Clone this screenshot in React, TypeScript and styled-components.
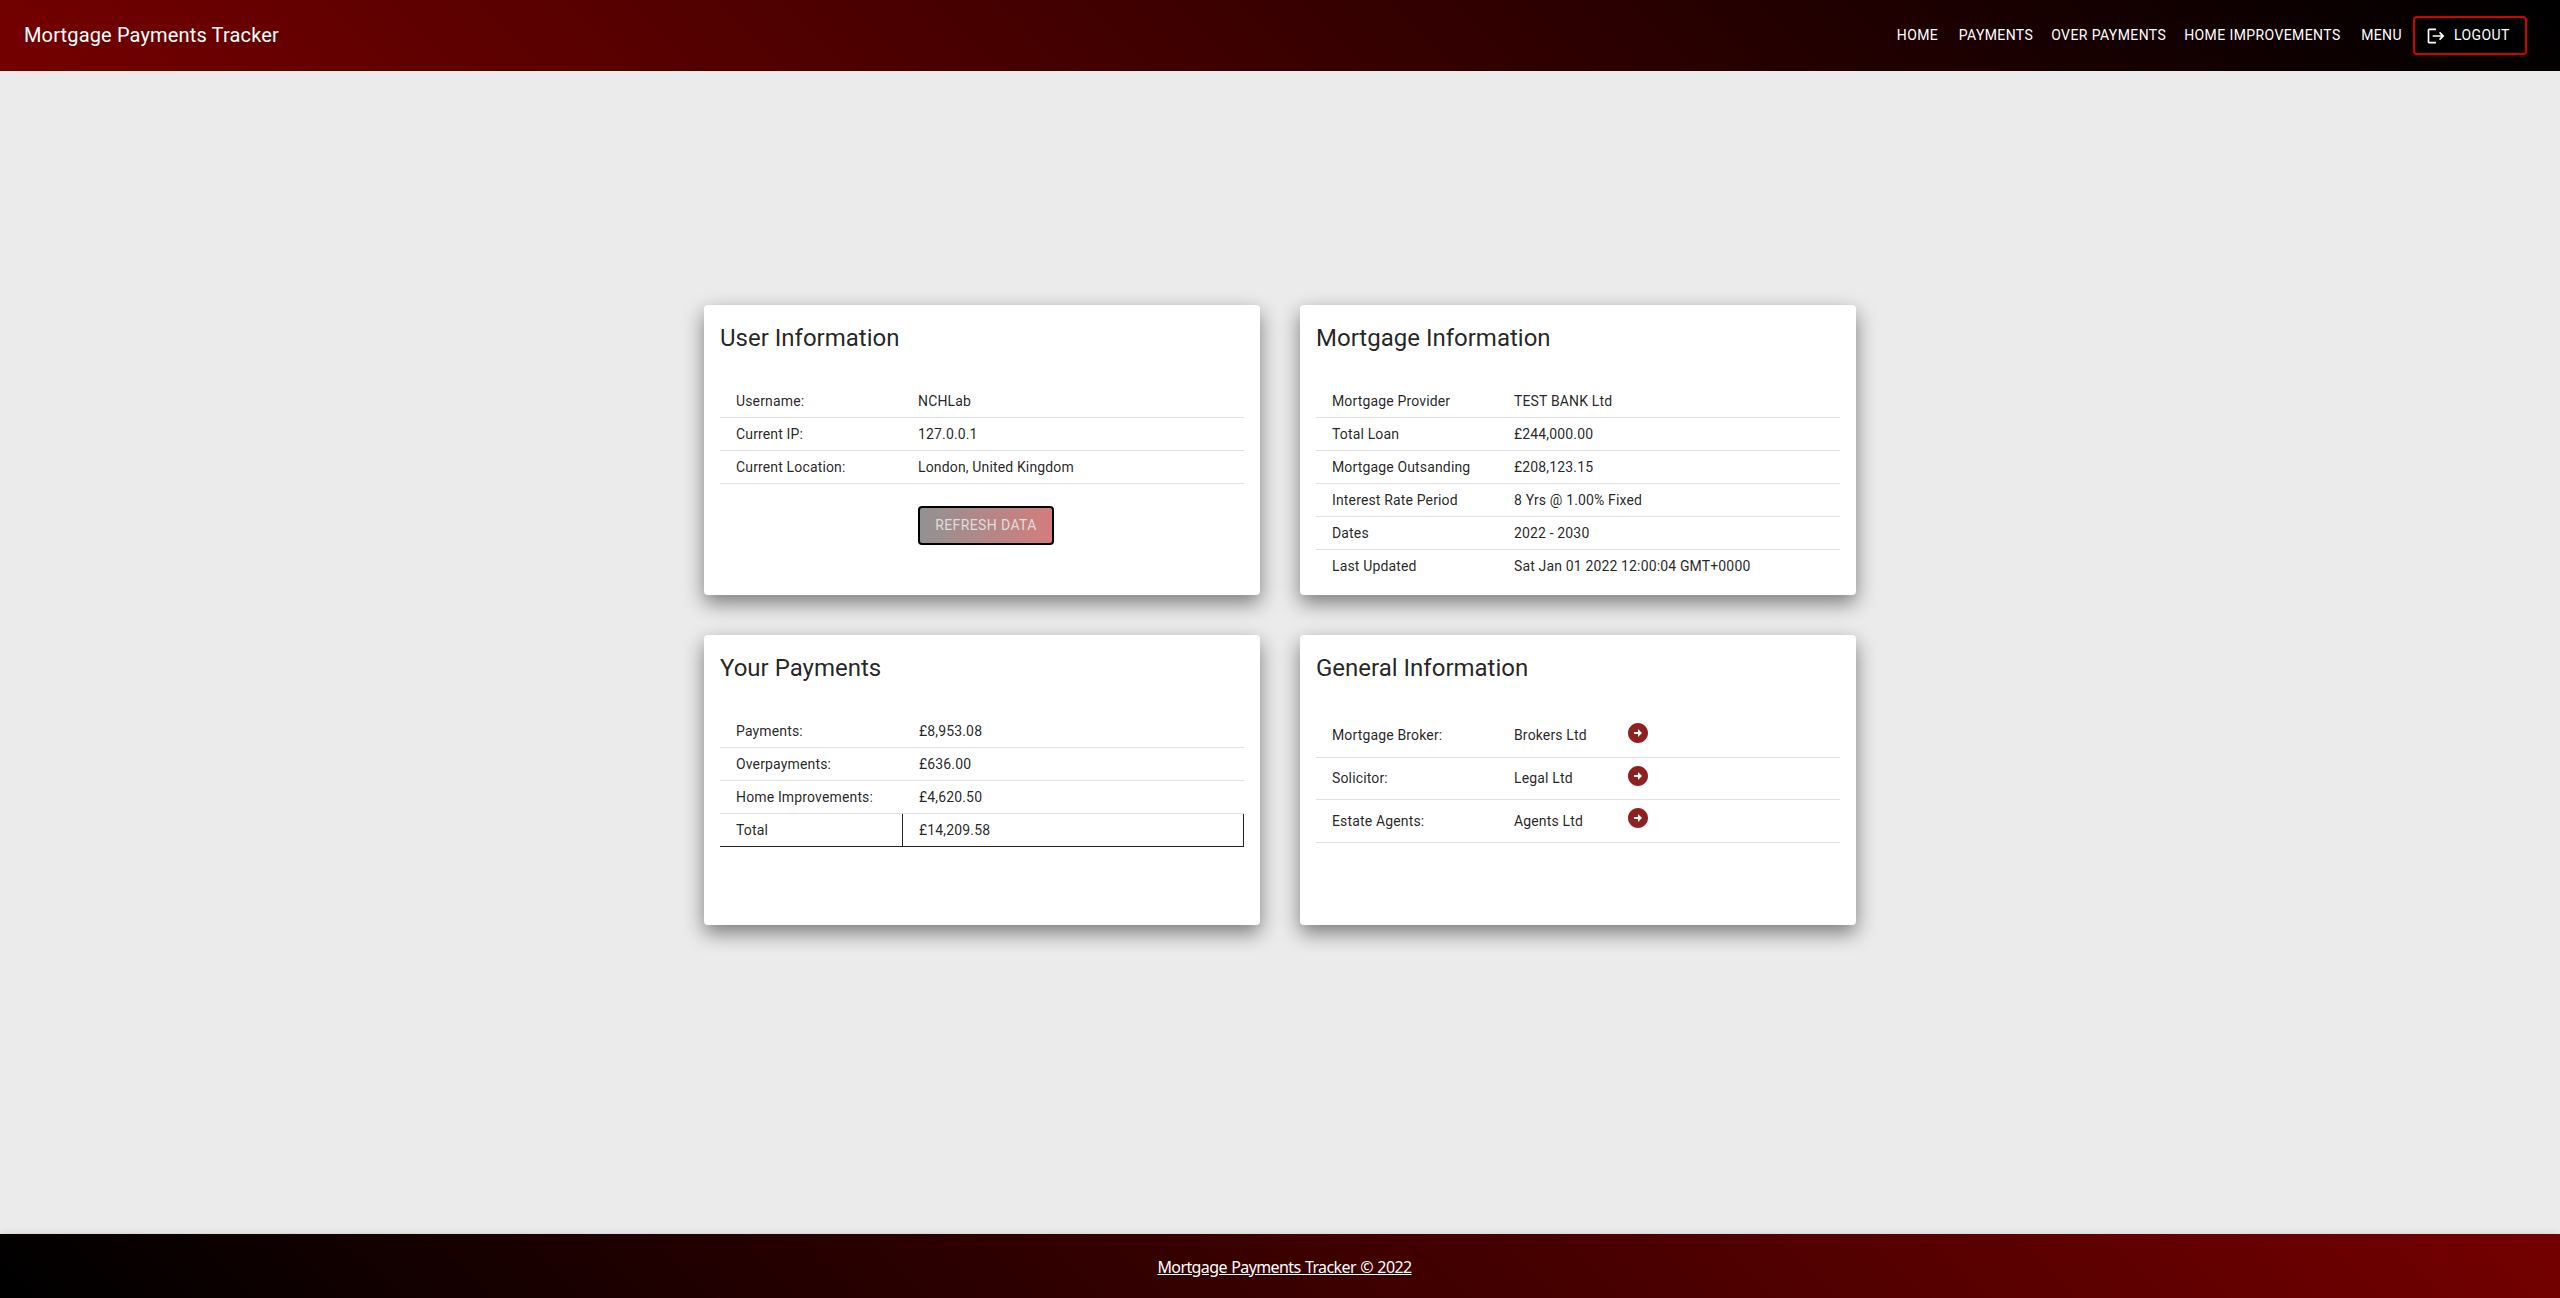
import React from "react";
import styled, { createGlobalStyle } from "styled-components";
import { MdLogout } from "react-icons/md";

const GlobalStyle = createGlobalStyle`
  *, *::before, *::after { box-sizing: border-box; }
  body {
    margin: 0;
    background: #ebebeb;
    color: rgba(0, 0, 0, 0.87);
    font-family: Roboto, "Liberation Sans", sans-serif;
  }
`;

const Page = styled.div`
  display: flex;
  flex-direction: column;
  height: 100vh;
  min-height: 1000px;
`;

const Header = styled.header`
  display: flex;
  align-items: center;
  justify-content: space-between;
  flex: none;
  height: 71px;
  padding: 0 33px 0 24px;
  color: #fff;
  background: linear-gradient(45deg, #740000 0%, #000 100%);
`;

const Brand = styled.div`
  margin-bottom: 1px;
  font-size: 20px;
  line-height: 32px;
  letter-spacing: 0.15px;
`;

const Nav = styled.nav`
  display: flex;
  align-items: center;
`;

const NavLink = styled.a<{ $gap: number }>`
  margin-right: ${(p) => p.$gap}px;
  font-size: 14px;
  line-height: 24.5px;
  letter-spacing: 0.4px;
  font-weight: 400;
  color: #fff;
  text-transform: uppercase;
`;

const LogoutButton = styled.button`
  display: flex;
  align-items: center;
  width: 114px;
  height: 39px;
  padding: 0 0 0 11px;
  gap: 8px;
  border: 2px solid #d60000;
  border-radius: 4px;
  background: #000;
  color: #fff;
  font: 400 14px/24.5px Roboto, sans-serif;
  letter-spacing: 0.4px;
  text-transform: uppercase;
`;

const Main = styled.main`
  display: grid;
  grid-template-columns: 556px 556px;
  grid-auto-rows: 290px;
  gap: 40px;
  justify-content: center;
  flex: 1;
  padding-top: 234px;
`;

const Card = styled.section`
  padding: 17px 16px 16px;
  border-radius: 4px;
  background: #fff;
  box-shadow: 0 8px 20px rgba(0, 0, 0, 0.48);
`;

const CardTitle = styled.h2`
  margin: 0 0 31px;
  font-size: 24px;
  font-weight: 400;
  line-height: 32px;
`;

const Row = styled.div<{ $tall?: boolean; $line?: boolean; $total?: boolean }>`
  display: grid;
  grid-template-columns: 182px 1fr;
  height: ${(p) => (p.$tall ? 42.7 : p.$line === false ? 32 : 33)}px;
  padding-bottom: ${(p) => (p.$tall ? 1 : 0)}px;
  border-bottom: ${(p) => (p.$line === false ? "0" : "1px")} solid
    ${(p) => (p.$total ? "#212121" : "#e0e0e0")};
  font-size: 14px;
  line-height: 20px;
  letter-spacing: 0.15px;
`;

const Cell = styled.div<{ $boxed?: boolean; $offset?: boolean }>`
  display: flex;
  align-items: center;
  padding-left: ${(p) => (p.$offset && !p.$boxed ? 17 : 16)}px;
  border: 0 solid #212121;
  border-width: ${(p) => (p.$boxed ? "0 1px" : "0")};
`;

const CompanyName = styled.span`
  width: 112px;
`;

const CompanyIcon = styled.svg`
  width: 24px;
  height: 24px;
  margin-bottom: 4.8px;
  fill: #8e2022;
`;

const RefreshButton = styled.button`
  display: block;
  width: 136px;
  height: 39px;
  margin: 22px 0 0 198px;
  padding: 0;
  border: 2px solid #000;
  border-radius: 4px;
  background: linear-gradient(90deg, #929292, #d47c7c);
  color: #dedede;
  font: 400 14px/24.5px Roboto, sans-serif;
  letter-spacing: 0.4px;
  text-transform: uppercase;
`;

const Footer = styled.footer`
  display: flex;
  justify-content: center;
  flex: none;
  height: 64px;
  padding: 21px 0 0 9px;
  background: linear-gradient(45deg, #000 0%, #740000 100%);
  box-shadow: 0 2px 4px -1px rgba(0, 0, 0, 0.2),
    0 4px 5px 0 rgba(0, 0, 0, 0.14), 0 1px 10px 0 rgba(0, 0, 0, 0.12);
`;

const FooterLink = styled.a`
  height: 24px;
  color: #fff;
  font: 400 16px/24px "Noto Sans", "Open Sans", sans-serif;
  letter-spacing: -0.6px;
  word-spacing: 0.8px;
  text-decoration: underline;
`;

const navItems = [
  { label: "Home", gap: 20.5 },
  { label: "Payments", gap: 18 },
  { label: "Over Payments", gap: 18 },
  { label: "Home Improvements", gap: 20.5 },
  { label: "Menu", gap: 11 },
];

const userRows = [
  ["Username:", "NCHLab"],
  ["Current IP:", "127.0.0.1"],
  ["Current Location:", "London, United Kingdom"],
];

const mortgageRows = [
  ["Mortgage Provider", "TEST BANK Ltd"],
  ["Total Loan", "£244,000.00"],
  ["Mortgage Outsanding", "£208,123.15"],
  ["Interest Rate Period", "8 Yrs @ 1.00% Fixed"],
  ["Dates", "2022 - 2030"],
  ["Last Updated", "Sat Jan 01 2022 12:00:04 GMT+0000"],
];

const paymentRows = [
  ["Payments:", "£8,953.08"],
  ["Overpayments:", "£636.00"],
  ["Home Improvements:", "£4,620.50"],
  ["Total", "£14,209.58"],
];

const companyRows = [
  { label: "Mortgage Broker:", name: "Brokers Ltd" },
  { label: "Solicitor:", name: "Legal Ltd" },
  { label: "Estate Agents:", name: "Agents Ltd" },
];

export default function App() {
  return (
    <>
      <GlobalStyle />
      <Page>
        <Header>
          <Brand>Mortgage Payments Tracker</Brand>
          <Nav>
            {navItems.map((item) => (
              <NavLink key={item.label} $gap={item.gap}>
                {item.label}
              </NavLink>
            ))}
            <LogoutButton>
              <MdLogout size={20} />
              Logout
            </LogoutButton>
          </Nav>
        </Header>
        <Main>
          <Card>
            <CardTitle>User Information</CardTitle>
            {userRows.map(([label, value]) => (
              <Row key={label}>
                <Cell>{label}</Cell>
                <Cell>{value}</Cell>
              </Row>
            ))}
            <RefreshButton disabled>Refresh Data</RefreshButton>
          </Card>
          <Card>
            <CardTitle>Mortgage Information</CardTitle>
            {mortgageRows.map(([label, value], i) => (
              <Row key={label} $line={i < mortgageRows.length - 1}>
                <Cell>{label}</Cell>
                <Cell>{value}</Cell>
              </Row>
            ))}
          </Card>
          <Card>
            <CardTitle>Your Payments</CardTitle>
            {paymentRows.map(([label, value]) => (
              <Row key={label} $total={label === "Total"}>
                <Cell>{label}</Cell>
                <Cell $offset $boxed={label === "Total"}>
                  {value}
                </Cell>
              </Row>
            ))}
          </Card>
          <Card>
            <CardTitle>General Information</CardTitle>
            {companyRows.map((row) => (
              <Row key={row.label} $tall>
                <Cell>{row.label}</Cell>
                <Cell>
                  <CompanyName>{row.name}</CompanyName>
                  <CompanyIcon viewBox="0 0 24 24">
                    <path d="M22 12c0-5.520-4.480-10-10-10S2 6.480 2 12s4.480 10 10 10 10-4.480 10-10zm-10 1H8v-2h4V8l4 4-4 4v-3z" />
                  </CompanyIcon>
                </Cell>
              </Row>
            ))}
          </Card>
        </Main>
        <Footer>
          <FooterLink>Mortgage Payments Tracker © 2022</FooterLink>
        </Footer>
      </Page>
    </>
  );
}
